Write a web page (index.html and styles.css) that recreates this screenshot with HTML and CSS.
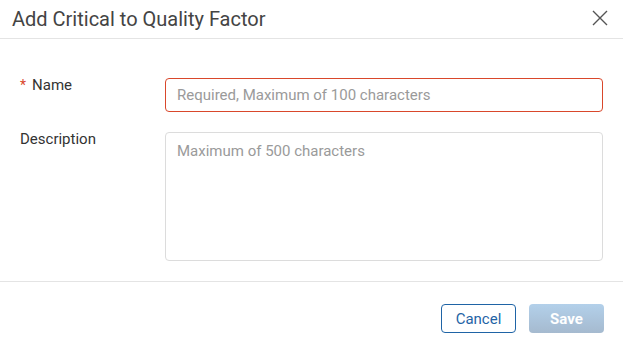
FILE: index.html
```html
<!DOCTYPE html>
<html lang="en">
<head>
  <meta charset="UTF-8">
  <title>Add Critical to Quality Factor</title>
  <link rel="stylesheet" href="styles.css">
</head>
<body>
  <div class="dialog">
    <div class="dialog-header">
      <h2>Add Critical to Quality Factor</h2>
      <button class="close-button" aria-label="Close">
        <svg width="16" height="16" viewBox="0 0 16 16"><path d="M1 1L15 15M15 1L1 15" stroke="#555" stroke-width="1.4" fill="none"/></svg>
      </button>
    </div>
    <div class="dialog-body">
      <div class="field-row">
        <label class="field-label" for="name"><span class="required">*</span>Name</label>
        <input type="text" id="name" class="field-input invalid" placeholder="Required, Maximum of 100 characters">
      </div>
      <div class="field-row">
        <label class="field-label" for="description">Description</label>
        <textarea id="description" class="field-input field-textarea" placeholder="Maximum of 500 characters"></textarea>
      </div>
    </div>
    <div class="dialog-footer">
      <button class="btn btn-secondary">Cancel</button>
      <button class="btn btn-primary" disabled>Save</button>
    </div>
  </div>
</body>
</html>
```

FILE: styles.css
```css
:root {
  --text: #333333;
  --title: #444444;
  --placeholder: #9a9a9a;
  --border: #dcdcdc;
  --divider: #e4e4e4;
  --error: #d9472b;
  --primary: #1f64a6;
}
body {
  margin: 0;
  font-family: Roboto, "Liberation Sans", Arial, sans-serif;
  background: #ffffff;
  color: var(--text);
}
.dialog {
  width: 623px;
  height: 352px;
  display: flex;
  flex-direction: column;
}
.dialog-header {
  display: flex;
  align-items: center;
  justify-content: space-between;
  height: 38px;
  padding: 0 15px 0 12px;
  border-bottom: 1px solid var(--divider);
}
.dialog-header h2 {
  margin: 0;
  font-size: 20px;
  font-weight: 400;
  color: var(--title);
}
.close-button {
  border: none;
  background: none;
  padding: 0;
  width: 16px;
  height: 16px;
  cursor: pointer;
  margin-top: -2px;
}
.close-button svg {
  display: block;
}
.dialog-body {
  padding: 39px 20px 20px 20px;
  display: flex;
  flex-direction: column;
  gap: 20px;
  border-bottom: 1px solid var(--divider);
}
.field-row {
  display: flex;
  align-items: flex-start;
}
.field-label {
  width: 145px;
  margin-top: -1px;
  font-size: 15px;
  line-height: 16px;
  color: var(--text);
}
.required {
  color: var(--error);
  margin-right: 6px;
  font-size: 14px;
}
.field-input {
  flex: 1;
  box-sizing: border-box;
  height: 34px;
  border: 1px solid var(--border);
  border-radius: 4px;
  padding: 0 11px;
  font-family: inherit;
  font-size: 15px;
  color: var(--text);
  outline: none;
}
.field-input::placeholder {
  color: var(--placeholder);
}
.field-input.invalid {
  border-color: var(--error);
}
.field-textarea {
  height: 129px;
  padding: 9px 11px;
  resize: none;
}
.dialog-footer {
  display: flex;
  justify-content: flex-end;
  gap: 13px;
  padding: 22px 19px 0 0;
}
.btn {
  width: 75px;
  height: 29px;
  padding: 0;
  border-radius: 4px;
  font-family: inherit;
  font-size: 15px;
  cursor: pointer;
}
.btn-secondary {
  background: #ffffff;
  border: 1px solid var(--primary);
  color: var(--primary);
}
.btn-primary {
  border: none;
  color: #ffffff;
  font-weight: 700;
  background: linear-gradient(#b3d0ea, #a5bacf);
}
.btn-primary:disabled {
  cursor: default;
}
```
